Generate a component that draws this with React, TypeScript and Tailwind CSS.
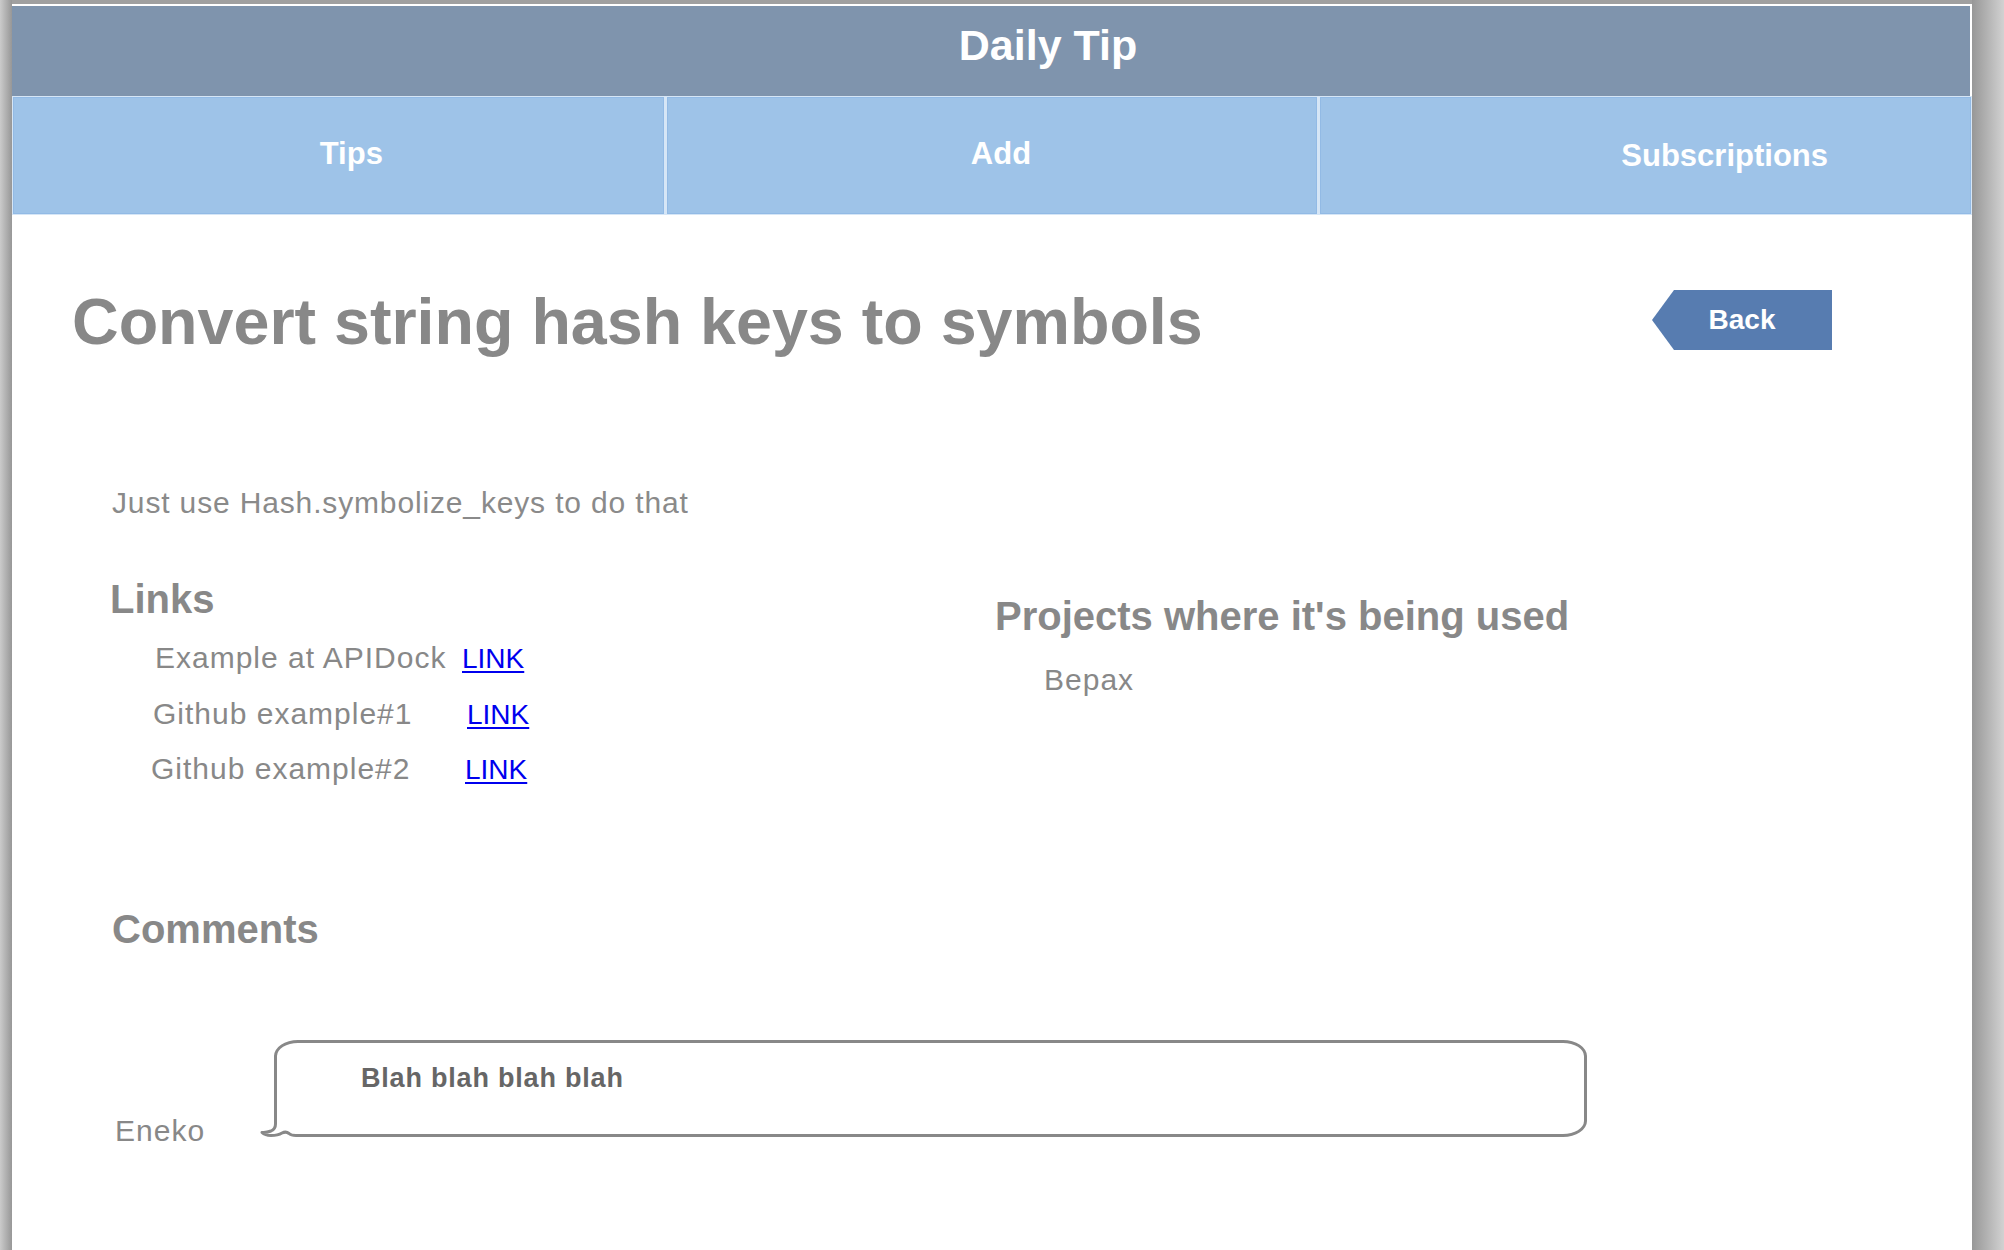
import React from "react";

const font = { fontFamily: '"Liberation Sans", Arial, Helvetica, sans-serif' };

function NavCell({ label, className }: { label: string; className: string }) {
  return (
    <div className="min-w-0 flex justify-center items-start bg-[#9ec3e8] border border-[#92bae5]">
      <span className={`text-white font-bold text-[31px] leading-none ${className}`}>{label}</span>
    </div>
  );
}

function LinkRow({ label, labelClass, mt }: { label: string; labelClass: string; mt: string }) {
  return (
    <div className={`flex items-baseline ${mt}`}>
      <span className={`text-[30px] leading-none tracking-[1px] text-[#888888] ${labelClass}`}>{label}</span>
      <a href="#" className="text-[28px] leading-none text-[#0000ee] underline decoration-[2px] underline-offset-[3px]">
        LINK
      </a>
    </div>
  );
}

export default function App() {
  return (
    <div className="flex h-[1250px] w-[2004px] overflow-hidden bg-[#a0a0a0]" style={font}>
      <div className="w-[12px] h-full bg-gradient-to-r from-[#cbcbcb] to-[#979797]" />
      <div className="w-[1960px] h-full pt-[4px] flex flex-col bg-[#a0a0a0]">
        <div className="flex-1 bg-white pt-[2px] flex flex-col">
          {/* Header */}
          <div className="h-[90px] mr-[2px] bg-[#7f94ad] flex justify-center items-start pt-[18px] pl-[114px]">
            <span className="text-white font-bold text-[43px] leading-none">Daily Tip</span>
          </div>
          {/* Nav */}
          <div className="h-[119px] grid grid-cols-3 gap-[3px] bg-[#d6e6f6] p-[1px]">
            <NavCell label="Tips" className="mt-[40px] ml-[26px]" />
            <NavCell label="Add" className="mt-[40px] ml-[18px]" />
            <NavCell label="Subscriptions" className="mt-[42px] ml-[158px]" />
          </div>

          {/* Title row */}
          <div className="flex items-start justify-between mt-[75px] pl-[60px] pr-[140px]">
            <h1 className="text-[64.6px] leading-none font-bold text-[#888888]">
              Convert string hash keys to symbols
            </h1>
            <button
              className="w-[180px] h-[60px] bg-[#577cb0] text-white font-bold text-[28px] leading-none flex items-center justify-center"
              style={{ clipPath: "polygon(22px 0, 100% 0, 100% 100%, 22px 100%, 0 50%)" }}
            >
              Back
            </button>
          </div>

          {/* Description */}
          <p className="mt-[133px] ml-[100px] text-[30px] leading-none tracking-[0.85px] text-[#8a8a8a]">
            Just use Hash.symbolize_keys to do that
          </p>

          {/* Links + Projects */}
          <div className="flex mt-[61px] ml-[98px]">
            <div className="w-[885px] flex flex-col">
              <h2 className="text-[40px] leading-none font-bold text-[#888888]">Links</h2>
              <div className="ml-[45px] mt-[24px]">
                <LinkRow label="Example at APIDock" labelClass="w-[307px]" mt="" />
              </div>
              <div className="ml-[43px]">
                <LinkRow label="Github example#1" labelClass="w-[314px]" mt="mt-[26px]" />
              </div>
              <div className="ml-[41px]">
                <LinkRow label="Github example#2" labelClass="w-[314px]" mt="mt-[25px]" />
              </div>
            </div>
            <div className="flex flex-col mt-[17px]">
              <h2 className="text-[40px] leading-none font-bold text-[#888888]">
                Projects where it's being used
              </h2>
              <span className="mt-[29px] ml-[49px] text-[30px] leading-none tracking-[1px] text-[#888888]">Bepax</span>
            </div>
          </div>

          {/* Comments */}
          <h2 className="mt-[125px] ml-[100px] text-[40px] leading-none font-bold text-[#888888]">Comments</h2>

          <div className="flex items-start mt-[91px] ml-[103px]">
            <span className="w-[159px] mt-[76px] text-[30px] leading-none tracking-[1px] text-[#888888]">Eneko</span>
            <div className="relative w-[1313px] h-[97px] border-[3px] border-[#888888] rounded-[24px/16px] pl-[84px] pt-[22px]">
              <span className="text-[27px] leading-none font-bold tracking-[0.8px] text-[#666666]">Blah blah blah blah</span>
              <svg
                className="absolute left-[-19px] bottom-[-6px]"
                width="44"
                height="20"
                viewBox="0 0 44 20"
              >
                <rect x="0" y="0" width="44" height="20" fill="white" />
                <path
                  d="M17.5 0 L17.5 4 Q17.5 9 13 11 Q8 13 4 12.5 Q7 15.5 13 15.5 Q20 15.5 24 13 Q28 11 31 13.5 Q33 15.5 38 15.5 L44 15.5"
                  fill="none"
                  stroke="#888888"
                  strokeWidth="3"
                  strokeLinecap="round"
                  strokeLinejoin="round"
                />
              </svg>
            </div>
          </div>
        </div>
      </div>
      <div className="flex-1 h-full bg-gradient-to-r from-[#979797] to-[#d2d2d2]" />
    </div>
  );
}
